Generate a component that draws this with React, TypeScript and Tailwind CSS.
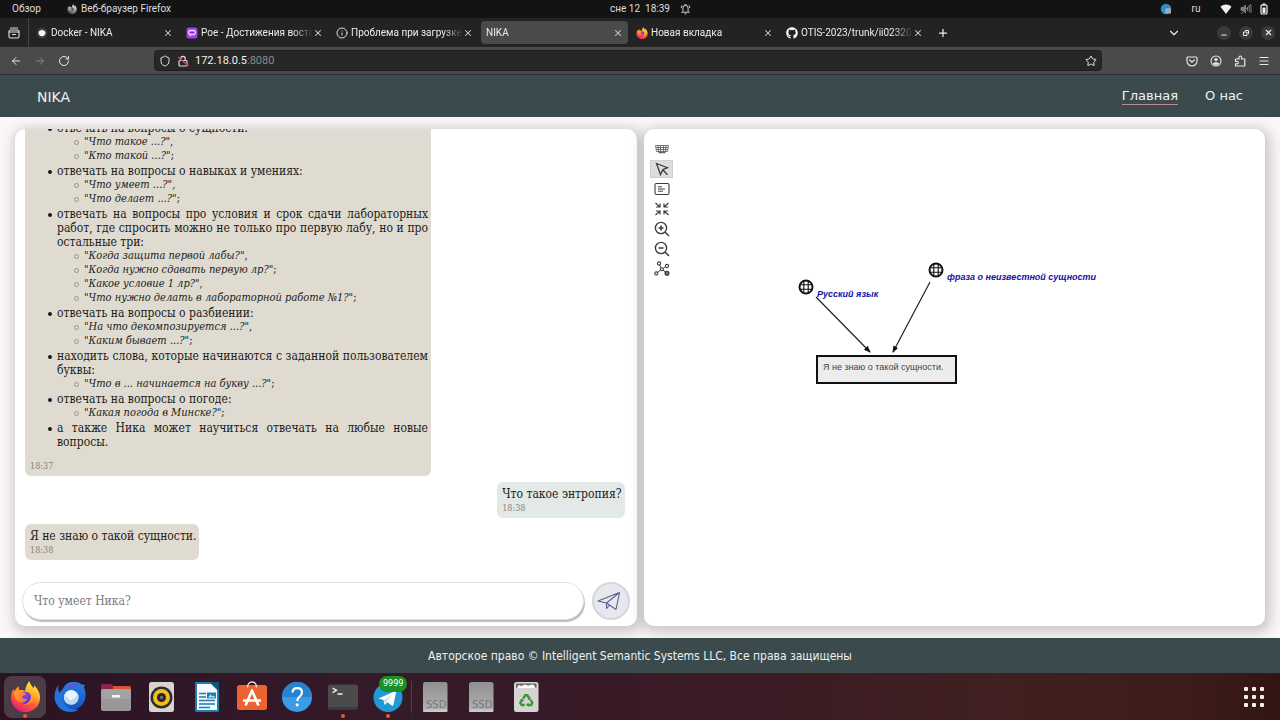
import type { ReactNode } from "react";
import {
  ArrowLeft,
  ArrowRight,
  ChevronDown,
  Info,
  Menu,
  Minus,
  Plus,
  RotateCw,
  Shield,
  Star,
  X,
} from "lucide-react";
import { FaGithub } from "react-icons/fa";

function FirefoxLogo({ className }: { className: string }) {
  return (
    <svg viewBox="0 0 32 32" className={className} aria-hidden="true">
      <defs>
        <linearGradient id="fxBody" x1="0.8" y1="0" x2="0.3" y2="1">
          <stop offset="0" stopColor="#fff04a" />
          <stop offset="0.35" stopColor="#ffb22a" />
          <stop offset="0.65" stopColor="#ff5a36" />
          <stop offset="1" stopColor="#e3197a" />
        </linearGradient>
        <linearGradient id="fxSwirl" x1="0" y1="0" x2="1" y2="1">
          <stop offset="0" stopColor="#ffa02e" />
          <stop offset="1" stopColor="#ff6a2e" />
        </linearGradient>
        <radialGradient id="fxCore" cx="0.5" cy="0.3" r="0.8">
          <stop offset="0" stopColor="#8f3fe0" />
          <stop offset="1" stopColor="#5a35b8" />
        </radialGradient>
      </defs>
      <path d="M20 0c.5 3 2.500 5 4.500 7.500.4-1 .4-2 .2-3.200C28.500 7.500 31 12 31 17a15 15 0 0 1-30 0.500C1 13.500 2 10.500 4 8c0 1 .3 1.800.8 2.500C6 8 7.500 6.500 9 5.500c-.2 1.500.1 2.800.8 3.700 2 0 4 0 5.700 1C16 6.500 17.500 3 20 0z" fill="url(#fxBody)" />
      <circle cx="16" cy="17.500" r="6.300" fill="url(#fxCore)" />
      <path d="M4 11.500c3-2 6-1 8 0 1.500.5 4 .2 4.500 1.500-.5 1.500-3.500 2-4 3 .2 2 2.500 3.500 5.500 2-1 3.500-5 5-8 4-3.500-1.200-6-5-6-10.500z" fill="url(#fxSwirl)" />
      <path d="M22 11c3 4 2.500 8.500-.5 11-2.300 2.200-5 2.800-8 2 4.500.2 7.500-3 8-6.500.2-2.300.2-4.500.5-6.500z" fill="#ffa12c" />
    </svg>
  );
}

function ThunderbirdLogo() {
  return (
    <svg viewBox="0 0 32 32" className="size-8" aria-hidden="true">
      <defs>
        <linearGradient id="tbBody" x1="0" y1="0" x2="0" y2="1">
          <stop offset="0" stopColor="#2a7fe6" />
          <stop offset="1" stopColor="#1455c0" />
        </linearGradient>
      </defs>
      <path d="M10 6c1.500-3 5-5 9.500-5 3.500 0 6 .8 8 2.500 1.700 0 3.300.3 4 1.200-1.200.2-1.800.8-1.500 1.800 1.300 2.500 1.800 5.500 1.500 9a15 15 0 0 1-29 4C6 14 8 9 10 6z" fill="url(#tbBody)" />
      <path d="M12.500 6.500c3-4.500 9.500-5 14-1.500-3.500-.5-6 .5-7.500 2.500z" fill="#5a56dd" />
      <path d="M4.500 4C2 7.500.3 11.500.5 16.500 1 25 8 31 16.500 31c3.500 0 6.500-1 8.500-2.500-8 1-13-2-15.500-7.500C7.500 16 8 11.500 9.500 8 7.500 9 6.500 10 5.500 12 4 9.500 4 6.500 4.500 4z" fill="#2274dc" />
      <circle cx="17.200" cy="16.300" r="7.300" fill="#e9f4fd" />
      <path d="M10.500 14l6.700 5.500L24 14c1.300 5-1.500 9.600-6.800 9.600S9.200 19 10.500 14z" fill="#c0daf2" />
    </svg>
  );
}

function FilesIcon() {
  return (
    <svg viewBox="0 0 32 32" className="size-8" aria-hidden="true">
      <path d="M1 5a2 2 0 0 1 2-2h8l3 2h15a2 2 0 0 1 2 2v10H1z" fill="#8a2748" />
      <path d="M13 5h16a2 2 0 0 1 2 2v6H13z" fill="#d9532f" />
      <rect x="1" y="8" width="30" height="22" rx="2.500" fill="#989898" />
      <rect x="1" y="8" width="30" height="10" rx="2" fill="#a3a3a3" />
      <rect x="12" y="14" width="8" height="2.500" fill="#f5f5f5" />
    </svg>
  );
}

function RhythmboxIcon() {
  return (
    <svg viewBox="0 0 32 32" className="size-8" aria-hidden="true">
      <rect x="4" y="1" width="25" height="30" rx="2.500" fill="#d9d4cd" />
      <circle cx="16.500" cy="16.500" r="11" fill="#2d2d2d" />
      <circle cx="16.500" cy="16.500" r="8.500" fill="#f3bd1d" />
      <circle cx="16.500" cy="16.500" r="4.500" fill="#252525" />
      <circle cx="16.500" cy="16.500" r="1.800" fill="#6d6d6d" />
    </svg>
  );
}

function WriterIcon() {
  return (
    <svg viewBox="0 0 32 32" className="size-8" aria-hidden="true">
      <path d="M4 1h17l7 7v21.500a1.500 1.500 0 0 1-1.500 1.500h-21A1.500 1.500 0 0 1 4 29.500z" fill="#1c7eae" />
      <path d="M6 3h14l6 6v20H6z" fill="#f3f9fc" />
      <path d="M19 1h9v9z" fill="#12557a" />
      <path d="M8 12.500h7M8 16h7M8 19.500h16M8 23h16M8 26.500h11" stroke="#1c7eae" strokeWidth="1.500" />
      <rect x="16" y="11.500" width="9" height="6" fill="#1c7eae" />
      <path d="M17 16.500l2.500-3 2 2 1.200-1 1.800 2z" fill="#bfe2f2" />
    </svg>
  );
}

function SoftwareIcon() {
  return (
    <svg viewBox="0 0 32 32" className="size-8" aria-hidden="true">
      <rect x="1" y="4" width="30" height="25" rx="2.500" fill="#ec6331" />
      <path d="M11.500 6.500C11.500 3 13.500 1 16 1s4.500 2 4.500 5.500" fill="none" stroke="#f6e0d3" strokeWidth="1.300" />
      <path d="M9.500 24.500L16 9.500l6.500 15M7 19.500h18" fill="none" stroke="#fff" strokeWidth="2.600" strokeLinejoin="round" />
    </svg>
  );
}

function HelpIcon() {
  return (
    <svg viewBox="0 0 32 32" className="size-8" aria-hidden="true">
      <circle cx="16" cy="16" r="15" fill="#3a9be6" />
      <path d="M1 16a15 15 0 0 1 30 0z" fill="#2583d2" />
      <path d="M11.500 11.500c.3-3 2.300-4.300 4.700-4.300 2.800 0 4.800 1.700 4.800 4.300 0 4-4.800 4-4.800 8.500" fill="none" stroke="#fff" strokeWidth="2.200" />
      <circle cx="16.200" cy="23.800" r="1.600" fill="#fff" />
    </svg>
  );
}

function TerminalIcon() {
  return (
    <svg viewBox="0 0 32 32" className="size-8" aria-hidden="true">
      <rect x="1" y="3.500" width="30" height="25" rx="2.500" fill="#4b4b4b" />
      <rect x="1" y="26" width="30" height="2.500" rx="1.200" fill="#3b3b3b" />
      <path d="M5.500 7l4 2.300-4 2.300M10.500 13h5" fill="none" stroke="#f2f2f2" strokeWidth="1.400" />
    </svg>
  );
}

function TelegramIcon() {
  return (
    <svg viewBox="0 0 32 32" className="size-8" aria-hidden="true">
      <circle cx="16" cy="16.500" r="14.500" fill="#2199d6" />
      <path d="M7 17.300l15.800-7c1-.4 1.600.1 1.300 1.300l-2.700 12.200c-.2 1-.9 1.200-1.700.7l-4.200-3.200-2 2c-.5.5-1.200.3-1.300-.4l-.6-3.900-4.300-1.200c-.9-.2-.9-.9-.3-1.200z" fill="#fff" />
      <path d="M12 19.200l8.500-6-6.500 7-.5 3.300z" fill="#b9dcf0" />
    </svg>
  );
}

function DriveIcon() {
  return (
    <svg viewBox="0 0 32 32" className="size-8" aria-hidden="true">
      <defs>
        <linearGradient id="ssd" x1="0" y1="0" x2="0" y2="1">
          <stop offset="0" stopColor="#8f8f8f" />
          <stop offset="1" stopColor="#b4b4b4" />
        </linearGradient>
      </defs>
      <rect x="4" y="1" width="24.500" height="30" rx="2.500" fill="url(#ssd)" />
      <rect x="4" y="28.500" width="24.500" height="2.500" rx="1.200" fill="#c9c9c9" />
      <text x="7" y="27" fontSize="10" fill="#777777" className="font-['DejaVu_Sans',sans-serif]">SSD</text>
    </svg>
  );
}

function TrashIcon() {
  return (
    <svg viewBox="0 0 32 32" className="size-8" aria-hidden="true">
      <rect x="4" y="1" width="24.500" height="30" rx="2.500" fill="#d7d5d4" />
      <rect x="6" y="2.500" width="20.500" height="4.500" rx="1" fill="#6b6967" />
      <path d="M7 7l1.500-3 3 1 3-1.500 4 1 3-1 2.500.5 1.500 3z" fill="#fafafa" />
      <g fill="none" stroke="#3a9a35" strokeWidth="2.400">
        <path d="M13.200 17.500l2-3.200h2.200l1.800 3" />
        <path d="M20.700 18.800l1.600 2.900-1.100 2.300h-3.400" />
        <path d="M14.800 24h-3.200l-1.300-2.200 1.800-3" />
      </g>
      <path d="M20.500 15.500v3.500h-3.300zM18.500 21.500V26l-2.500-2.200zM9.800 18.200l3.300-.8.800 3.200z" fill="#3a9a35" />
    </svg>
  );
}

function SystemBar() {
  return (
    <header className="grid h-[18px] grid-cols-[1fr_auto_1fr] items-center bg-[#131313] text-[#dedede]">
      <div className="flex items-center pl-3">
        <button type="button" className="w-[55px] text-left">Обзор</button>
        <button type="button" className="flex items-center gap-1">
          <FirefoxLogo className="size-[10px] grayscale" />
          Веб-браузер Firefox
        </button>
      </div>
      <time className="whitespace-pre">сне 12  18:39</time>
      <div className="flex items-center justify-between pr-[10px] pl-[10px]">
        <svg viewBox="0 0 12 12" className="size-[11px]" fill="none" stroke="#dedede" strokeWidth="1" aria-hidden="true">
          <path d="M3.200 8.500V4.300a2.800 2.800 0 0 1 5.600 0v4.200M1.500 9h9M5 10.800h2M1.300 4.500l.8-3M10.700 4.500l-.8-3M4.500 1h3" />
        </svg>
        <div className="flex items-center">
          <svg viewBox="0 0 12 12" className="size-3" aria-hidden="true">
            <circle cx="6" cy="6" r="5.300" fill="#2b8ec9" />
            <path d="M5 6.500c1-2 5-2 6 0v4H5z" fill="#a9a9a9" />
          </svg>
          <span className="w-12 text-center">ru</span>
          <svg viewBox="0 0 12 12" className="size-3" aria-hidden="true">
            <path d="M.5 3.800C3.800.8 8.200.8 11.500 3.800L6 11z" fill="#f0f0f0" />
          </svg>
          <svg viewBox="0 0 12 12" className="ml-2 size-3" fill="none" stroke="#7b7b7b" aria-hidden="true">
            <path d="M1 4.500h2l2.500-2.500v8L3 7.500H1z" fill="#7b7b7b" />
            <path d="M7.500 4v4M9.300 3v6M11 2v8M1 11L11 1" />
          </svg>
          <svg viewBox="0 0 12 12" className="ml-1.5 size-3" aria-hidden="true">
            <rect x="4.500" y=".5" width="3" height="2" fill="#f0f0f0" />
            <rect x="3" y="2" width="6" height="9" rx="1" fill="none" stroke="#f0f0f0" strokeWidth="1.200" />
            <rect x="4.500" y="4.500" width="3" height="5.500" fill="#f0f0f0" />
          </svg>
        </div>
      </div>
    </header>
  );
}

type Tab = { title: string; icon?: ReactNode; active?: boolean };

const tabs: Tab[] = [
  {
    title: "Docker - NIKA",
    icon: (
      <svg viewBox="0 0 12 12" className="size-3" aria-hidden="true">
        <circle cx="6" cy="6" r="5.500" fill="#3a3a3a" />
        <path d="M2.500 5l1.300-1.500h1L6 2.500l1.200 1h1L9.500 5c.2 2.500-1 4.300-3.500 4.300S2.300 7.500 2.500 5z" fill="#f5f5f5" />
      </svg>
    ),
  },
  {
    title: "Poe - Достижения восто",
    icon: (
      <svg viewBox="0 0 12 12" className="size-3" aria-hidden="true">
        <rect x=".5" y=".5" width="11" height="11" rx="2.500" fill="#a23df0" />
        <path d="M3 2.800h6v1h1v3.400H9v1H5.500L4 9.700V8.200H3v-1H2V3.800h1z" fill="#e5c5fb" />
        <path d="M3.500 4.500h5v2h-5z" fill="#8328d4" />
      </svg>
    ),
  },
  { title: "Проблема при загрузке", icon: <Info className="size-3 text-[#dedede]" /> },
  { title: "NIKA", active: true },
  { title: "Новая вкладка", icon: <FirefoxLogo className="size-3" /> },
  { title: "OTIS-2023/trunk/ii02320", icon: <FaGithub className="size-3 text-white" /> },
];

function TabBar() {
  return (
    <div className="flex h-[29px] items-center bg-[#232323] text-[#ececec]">
      <button type="button" aria-label="Список вкладок" className="flex h-full w-[29px] items-center justify-center border-r border-[#454545]">
        <svg viewBox="0 0 12 12" className="size-3" fill="none" stroke="#dedede" strokeWidth="1.100" strokeLinecap="round" aria-hidden="true">
          <path d="M2.500 1h7" />
          <rect x="1" y="3" width="10" height="8" rx="1.500" />
          <path d="M1 5h10M4.500 7.500h3" />
        </svg>
      </button>
      <div role="tablist" className="flex items-center gap-[3px] pl-0.5">
        {tabs.map((tab) => (
          <div
            key={tab.title}
            role="tab"
            aria-selected={!!tab.active}
            className={`flex h-[23px] w-[147px] items-center rounded-sm px-[5px] ${tab.active ? "bg-[#4a4a4a]" : ""}`}
          >
            {tab.icon && <span className="mr-[3px] shrink-0">{tab.icon}</span>}
            <span className="min-w-0 flex-1 overflow-hidden whitespace-nowrap [mask-image:linear-gradient(to_left,transparent,black_20px)]">
              {tab.title}
            </span>
            <button type="button" aria-label="Закрыть вкладку" className="shrink-0">
              <X className="size-[10px] text-[#d4d4d4]" strokeWidth={2.5} />
            </button>
          </div>
        ))}
      </div>
      <button type="button" aria-label="Новая вкладка" className="ml-[9px]">
        <Plus className="size-3" strokeWidth={2.5} />
      </button>
      <div className="ml-auto flex items-center gap-2 pr-[5px]">
        <button type="button" aria-label="Все вкладки" className="mr-7">
          <ChevronDown className="size-[14px]" />
        </button>
        <button type="button" aria-label="Свернуть" className="grid size-[14px] place-items-center rounded-full bg-[#3a3a3a]">
          <Minus className="size-2 translate-y-0.5" strokeWidth={3} />
        </button>
        <button type="button" aria-label="Восстановить" className="grid size-[14px] place-items-center rounded-full bg-[#3a3a3a]">
          <svg viewBox="0 0 8 8" className="size-2" fill="none" stroke="#ececec" aria-hidden="true">
            <path d="M1.500 3h3.500v3.500H1.500zM3 1.500h3.500V5" />
          </svg>
        </button>
        <button type="button" aria-label="Закрыть" className="grid size-[14px] place-items-center rounded-full bg-[#3a3a3a]">
          <X className="size-[9px]" strokeWidth={3} />
        </button>
      </div>
    </div>
  );
}

function NavBar() {
  return (
    <div className="flex h-7 items-center border-b border-[#2c3032] bg-[#4a4a4a] text-[#e6e6e6]">
      <div className="flex w-[154px] items-center gap-3 pl-[10px]">
        <button type="button" aria-label="Назад"><ArrowLeft className="size-3" /></button>
        <button type="button" aria-label="Вперёд" className="text-[#868686]"><ArrowRight className="size-3" /></button>
        <button type="button" aria-label="Обновить"><RotateCw className="size-3" /></button>
      </div>
      <div className="flex h-[21px] flex-1 items-center rounded-sm border border-[#1e1e1e] bg-[#272727] px-1">
        <Shield className="size-3" />
        <svg viewBox="0 0 12 12" className="mx-[6px] size-3" fill="none" stroke="#dedede" strokeWidth="1.200" aria-hidden="true">
          <path d="M3.800 5.500V3.500a2.200 2.200 0 0 1 4.400 0v2" />
          <rect x="2" y="5.500" width="8" height="5.500" rx="1" />
          <path d="M1 2l10.500 9" stroke="#e0325a" strokeWidth="1.600" />
        </svg>
        <span className="flex-1 text-[11px] text-[#f2f2f2]">
          172.18.0.5<span className="text-[#8b8b8b]">:8080</span>
        </span>
        <button type="button" aria-label="В закладки"><Star className="size-3" /></button>
      </div>
      <div className="flex w-[178px] items-center justify-end gap-3 pr-[10px]">
        <button type="button" aria-label="Pocket">
          <svg viewBox="0 0 12 12" className="size-3" fill="none" stroke="#e6e6e6" strokeWidth="1.200" strokeLinecap="round" aria-hidden="true">
            <path d="M1 3a1 1 0 0 1 1-1h8a1 1 0 0 1 1 1v3a5 5 0 0 1-10 0zM3.700 5L6 7.200 8.300 5" />
          </svg>
        </button>
        <button type="button" aria-label="Профиль">
          <svg viewBox="0 0 12 12" className="size-3" fill="none" stroke="#e6e6e6" aria-hidden="true">
            <circle cx="6" cy="6" r="5" strokeWidth="1.100" />
            <circle cx="6" cy="4.600" r="1.700" fill="#e6e6e6" stroke="none" />
            <path d="M2.800 8.800c.6-2 5.800-2 6.400 0-1.600 1.800-4.800 1.800-6.400 0z" fill="#e6e6e6" stroke="none" />
          </svg>
        </button>
        <button type="button" aria-label="Расширения">
          <svg viewBox="0 0 12 12" className="size-3" fill="none" stroke="#e6e6e6" strokeWidth="1.200" strokeLinejoin="round" aria-hidden="true">
            <path d="M1.500 4H5V2.300a1.300 1.300 0 0 1 2.600 0V4h3.200v7H1.500V8.800h1.700a1.100 1.100 0 0 0 0-2.300H1.500z" />
          </svg>
        </button>
        <button type="button" aria-label="Меню"><Menu className="size-3" /></button>
      </div>
    </div>
  );
}

type Topic = { text: string; samples: { phrase: string; end: string }[] };

const topics: Topic[] = [
  {
    text: "отвечать на вопросы о сущности:",
    samples: [
      { phrase: "\"Что такое ...?\"", end: "," },
      { phrase: "\"Кто такой ...?\"", end: ";" },
    ],
  },
  {
    text: "отвечать на вопросы о навыках и умениях:",
    samples: [
      { phrase: "\"Что умеет ...?\"", end: "," },
      { phrase: "\"Что делает ...?\"", end: ";" },
    ],
  },
  {
    text: "отвечать на вопросы про условия и срок сдачи лабораторных работ, где спросить можно не только про первую лабу, но и про остальные три:",
    samples: [
      { phrase: "\"Когда защита первой лабы?\"", end: "," },
      { phrase: "\"Когда нужно сдавать первую лр?\"", end: ";" },
      { phrase: "\"Какое условие 1 лр?\"", end: "," },
      { phrase: "\"Что нужно делать в лабораторной работе №1?\"", end: ";" },
    ],
  },
  {
    text: "отвечать на вопросы о разбиении:",
    samples: [
      { phrase: "\"На что декомпозируется ...?\"", end: "," },
      { phrase: "\"Каким бывает ...?\"", end: ";" },
    ],
  },
  {
    text: "находить слова, которые начинаются с заданной пользователем буквы:",
    samples: [{ phrase: "\"Что в ... начинается на букву ...?\"", end: ";" }],
  },
  {
    text: "отвечать на вопросы о погоде:",
    samples: [{ phrase: "\"Какая погода в Минске?\"", end: ";" }],
  },
  { text: "а также Ника может научиться отвечать на любые новые вопросы.", samples: [] },
];

function Bubble({ own, time, children }: { own?: boolean; time: string; children: ReactNode }) {
  return (
    <article
      className={`max-w-[406px] shrink-0 rounded-md pt-[5px] pr-[3px] pb-[3px] pl-[5px] ${own ? "self-end bg-[#e2e9e6]" : "self-start bg-[#dfdbd0]"}`}
    >
      {children}
      <time className="block text-[9px] leading-[14px] text-[#85837d]">{time}</time>
    </article>
  );
}

function Chat() {
  return (
    <section className="flex min-w-0 flex-1 flex-col overflow-hidden rounded-[10px] bg-white font-['DejaVu_Serif_Condensed','DejaVu_Serif',serif] text-[12px] leading-[14px] text-[#1b1b1b] shadow-[2px_3px_12px_4px_rgba(80,72,75,0.26)]">
      <div className="flex min-h-0 flex-1 flex-col justify-end gap-1.5 overflow-hidden pr-3 pl-[10px]">
        <Bubble time="18:37">
          <ul className="mb-[10px] pl-[27px] text-justify">
            {topics.map((topic) => (
              <li
                key={topic.text}
                className="before:mr-[5px] before:-ml-[9px] before:inline-block before:size-1 before:rounded-full before:bg-[#1b1b1b] before:align-middle before:content-['']"
              >
                {topic.text}
                {topic.samples.length > 0 && (
                  <ul className="pb-px pl-[27px] text-left text-[11px]">
                    {topic.samples.map((sample) => (
                      <li
                        key={sample.phrase}
                        className="before:mr-[5px] before:-ml-[10px] before:inline-block before:size-[5px] before:rounded-full before:border before:border-[#96938a] before:align-middle before:content-['']"
                      >
                        <em>{sample.phrase}</em>
                        {sample.end}
                      </li>
                    ))}
                  </ul>
                )}
              </li>
            ))}
          </ul>
        </Bubble>
        <Bubble own time="18:38">
          <p>Что такое энтропия?</p>
        </Bubble>
        <Bubble time="18:38">
          <p>Я не знаю о такой сущности.</p>
        </Bubble>
      </div>
      <form className="flex items-center gap-2 px-[7px] pt-[22px] pb-[6px]" onSubmit={(event) => event.preventDefault()}>
        <input
          type="text"
          aria-label="Сообщение"
          placeholder="Что умеет Ника?"
          className="h-[38px] min-w-0 flex-1 rounded-full border border-[#dbe3e3] bg-white px-[11px] shadow-[1px_2px_1px_#b9bdc0] outline-none placeholder:text-[#7b7b7b]"
        />
        <button type="submit" aria-label="Отправить" className="grid size-[38px] place-items-center rounded-full border-2 border-[#d3d6da] bg-[#e8e7ed] pr-1">
          <svg viewBox="0 0 24 20" className="h-5 w-6" fill="none" stroke="#586490" strokeWidth="1.100" strokeLinejoin="round" aria-hidden="true">
            <path d="M1 10L22.500 1.500 19 18.500l-9.500-6.500zM1 10l8.500 2L22.500 1.500 9.500 12v5.500l3-3.400" />
          </svg>
        </button>
      </form>
    </section>
  );
}

function Tool({ label, active, children }: { label: string; active?: boolean; children: ReactNode }) {
  return (
    <button
      type="button"
      aria-label={label}
      className={`grid h-[18px] w-[23px] place-items-center border ${active ? "border-[#cfcfcf] bg-[#dddddd]" : "border-transparent"}`}
    >
      <svg viewBox="0 0 16 16" className="size-4" fill="none" stroke="#3d3d3d" strokeWidth="1.300" aria-hidden="true">
        {children}
      </svg>
    </button>
  );
}

function GraphToolbar() {
  return (
    <div role="toolbar" className="relative flex w-9 flex-col items-center gap-0.5 pt-[11px]">
      <Tool label="Клавиатура">
        <path d="M1.500 4.500h13l-1 6h-11z" strokeWidth="1" stroke="#777" />
        <path d="M2 6.500h12M2.300 8.500h11.400M4 4.500l.5 6M6.500 4.500v6M9.500 4.500v6M12 4.500l-.5 6" strokeWidth=".8" stroke="#555" />
        <path d="M4.500 11.500h7" stroke="#666" strokeWidth="1.500" />
      </Tool>
      <Tool label="Выбор" active>
        <path d="M2.500 2.500l4 11 2.300-4.800 4.700-2zM8.800 8.700l4.700 5" />
      </Tool>
      <Tool label="Содержимое">
        <rect x="1" y="2.500" width="14" height="11" rx="1.500" strokeWidth="1.100" />
        <path d="M4 5.800h4M4 8h7M4 10.200h5" strokeWidth="1" />
      </Tool>
      <Tool label="Свернуть граф">
        <path d="M1.500 2l4.500 4M6 2.500V6H2M14.500 2L10 6M10 2.500V6h4M1.500 14L6 10M6 13.500V10H2M14.500 14L10 10M10 13.500V10h4" strokeWidth="1.200" />
      </Tool>
      <Tool label="Увеличить">
        <circle cx="7" cy="7" r="5.600" strokeWidth="1.400" />
        <path d="M11 11l4 4M4.500 7h5M7 4.500v5" strokeWidth="1.600" />
      </Tool>
      <Tool label="Уменьшить">
        <circle cx="7" cy="7" r="5.600" strokeWidth="1.400" />
        <path d="M11 11l4 4M4.500 7h5" strokeWidth="1.600" />
      </Tool>
      <Tool label="Граф">
        <path d="M5.500 4l1.700 3M9 7.500l2.500-2M6.500 9L3.500 11.500M9 9l3 2.500" strokeWidth="1" />
        <circle cx="5" cy="2.500" r="1.600" strokeWidth="1.100" />
        <circle cx="7.800" cy="8.300" r="1.500" strokeWidth="1.100" />
        <circle cx="13" cy="5" r="1.600" strokeWidth="1.100" />
        <circle cx="2.300" cy="12.500" r="1.600" strokeWidth="1.100" />
        <circle cx="13" cy="12.300" r="1.900" fill="#777" />
      </Tool>
    </div>
  );
}

function ConceptNode({ x, y }: { x: number; y: number }) {
  return (
    <g transform={`translate(${x} ${y})`} fill="none" stroke="#111">
      <circle r="6.500" strokeWidth="2" fill="#fff" />
      <path d="M-2.200 -6v12M2.200 -6v12M-6 -2.200h12M-6 2.200h12" strokeWidth="1.100" />
    </g>
  );
}

function Graph() {
  return (
    <section className="relative min-w-0 flex-1 rounded-[10px] bg-white shadow-[2px_3px_12px_4px_rgba(80,72,75,0.26)]">
      <svg className="absolute inset-0 size-full font-['Liberation_Sans',Arial,sans-serif]">
        <defs>
          <marker id="arrow" markerWidth="7" markerHeight="6" refX="6" refY="3" orient="auto" markerUnits="userSpaceOnUse">
            <path d="M0 .3L7 3 0 5.700z" fill="#111" />
          </marker>
        </defs>
        <line x1="172" y1="168" x2="226" y2="223" stroke="#222" strokeWidth="1.200" markerEnd="url(#arrow)" />
        <line x1="286" y1="153" x2="249" y2="223" stroke="#222" strokeWidth="1.200" markerEnd="url(#arrow)" />
        <ConceptNode x={162} y={158} />
        <ConceptNode x={292} y={141} />
        <g fill="#1512a3" fontSize="9" fontWeight="bold" fontStyle="italic">
          <text x="173" y="168">Русский язык</text>
          <text x="303" y="151">фраза о неизвестной сущности</text>
        </g>
        <rect x="173" y="227" width="139" height="27" fill="#ececec" stroke="#111" strokeWidth="2" />
        <text x="179" y="241" fontSize="9" fill="#444">Я не знаю о такой сущности.</text>
      </svg>
      <GraphToolbar />
    </section>
  );
}

function DockItem({ label, active, running, badge, children }: { label: string; active?: boolean; running?: boolean; badge?: string; children: ReactNode }) {
  return (
    <button
      type="button"
      aria-label={label}
      className={`relative grid size-[42px] place-items-center rounded-lg ${active ? "bg-[#4c3c46]" : ""}`}
    >
      {children}
      {badge && (
        <span className="absolute top-0 left-3 rounded-full bg-[#1a9127] px-1 font-['DejaVu_Sans',sans-serif] text-[8px] leading-4 text-white">{badge}</span>
      )}
      {running && <span className="absolute bottom-0 left-[19px] size-1 rounded-full bg-[#ea5b2c]" />}
    </button>
  );
}

function Dock() {
  return (
    <nav aria-label="Панель приложений" className="flex h-[47px] items-center bg-[linear-gradient(90deg,#2b1324_0%,#351a29_30%,#3a1b26_55%,#40201f_80%,#3d1d1b_92%,#321512_100%)] pr-4 pl-1">
      <div className="flex w-[405px] justify-between">
        <DockItem label="Firefox" active running><FirefoxLogo className="size-[31px]" /></DockItem>
        <DockItem label="Thunderbird"><ThunderbirdLogo /></DockItem>
        <DockItem label="Файлы"><FilesIcon /></DockItem>
        <DockItem label="Rhythmbox"><RhythmboxIcon /></DockItem>
        <DockItem label="LibreOffice Writer"><WriterIcon /></DockItem>
        <DockItem label="Магазин приложений"><SoftwareIcon /></DockItem>
        <DockItem label="Справка"><HelpIcon /></DockItem>
        <DockItem label="Терминал" running><TerminalIcon /></DockItem>
        <DockItem label="Telegram" running badge="9999"><TelegramIcon /></DockItem>
      </div>
      <div className="mx-0.5 h-8 w-px bg-[#523a48]" />
      <div className="flex w-[133px] justify-between">
        <DockItem label="Диск 1"><DriveIcon /></DockItem>
        <DockItem label="Диск 2"><DriveIcon /></DockItem>
        <DockItem label="Корзина"><TrashIcon /></DockItem>
      </div>
      <button type="button" aria-label="Все приложения" className="ml-auto grid grid-cols-3 gap-1">
        {Array.from({ length: 9 }, (_, index) => (
          <span key={index} className="size-1 rounded-[1px] bg-[#f7efee]" />
        ))}
      </button>
    </nav>
  );
}

export default function App() {
  return (
    <div className="flex h-screen flex-col overflow-hidden font-[Roboto,sans-serif] text-[10px] leading-[14px]">
      <SystemBar />
      <TabBar />
      <NavBar />
      <div className="flex min-h-0 flex-1 flex-col bg-[#fbf7f9] font-['DejaVu_Sans',sans-serif]">
        <header className="flex h-[42px] shrink-0 items-center justify-between bg-[#3b4a4d] px-[37px] pt-px text-[#f0f2f2]">
          <span className="text-[14px]">NIKA</span>
          <nav className="flex gap-[27px] text-[13px] leading-4">
            <a href="#main" className="border-b border-[#c08a8f]">Главная</a>
            <a href="#about">О нас</a>
          </nav>
        </header>
        <main className="flex min-h-0 flex-1 gap-[7px] px-[15px] py-3">
          <Chat />
          <Graph />
        </main>
        <footer className="flex h-[35px] shrink-0 items-center justify-center bg-[#3b4a4d] font-['DejaVu_Sans_Condensed','DejaVu_Sans',sans-serif] text-[12px] text-[#eef0f0]">
          Авторское право © Intelligent Semantic Systems LLC, Все права защищены
        </footer>
      </div>
      <Dock />
    </div>
  );
}
